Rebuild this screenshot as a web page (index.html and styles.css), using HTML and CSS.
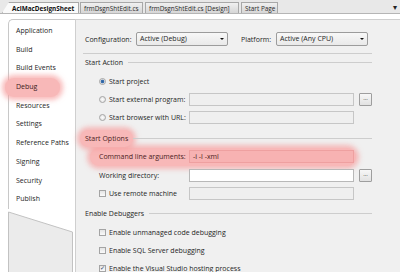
FILE: index.html
```html
<!DOCTYPE html>
<html lang="en">
<head>
    <meta charset="UTF-8">
    <title>AclMacDesignSheet - Debug</title>
    <link rel="stylesheet" href="styles.css">
</head>
<body>
    <div class="tabbar">
        <div class="tab active">AclMacDesignSheet</div>
        <div class="tab code">frmDsgnShtEdit.cs</div>
        <div class="tab design">frmDsgnShtEdit.cs [Design]</div>
        <div class="tab start">Start Page</div>
        <div class="tab-menu">&#9662;</div>
    </div>

    <div class="designer">
        <div class="sidebar">
            <ul class="nav">
                <li>Application</li>
                <li>Build</li>
                <li>Build Events</li>
                <li class="selected">Debug</li>
                <li>Resources</li>
                <li>Settings</li>
                <li>Reference Paths</li>
                <li>Signing</li>
                <li>Security</li>
                <li>Publish</li>
            </ul>
            <svg class="nav-tail" width="67" height="63" viewBox="0 0 67 63">
                <polygon points="0.5,3 64.5,23 64.5,64 0.5,64" fill="#ebebeb" stroke="#c2c2c2" stroke-width="1"/>
            </svg>
        </div>

        <div class="page">
            <div class="config-row">
                <span class="config-label">Configuration:</span>
                <div class="select">Active (Debug)</div>
                <span class="config-label platform">Platform:</span>
                <div class="select">Active (Any CPU)</div>
            </div>
            <div class="rule"></div>

            <div class="group-head"><span>Start Action</span></div>
            <div class="row first">
                <span class="radio checked"></span>
                <span class="label">Start project</span>
            </div>
            <div class="row">
                <span class="radio"></span>
                <span class="label">Start external program:</span>
                <div class="field"></div>
                <div class="browse">...</div>
            </div>
            <div class="row">
                <span class="radio"></span>
                <span class="label">Start browser with URL:</span>
                <div class="field"></div>
                <div class="browse-gap"></div>
            </div>

            <div class="group-head options"><span class="mark">Start Options</span></div>
            <div class="row marked">
                <span class="label">Command line arguments:</span>
                <div class="field">-i -l -xml</div>
            </div>
            <div class="row">
                <span class="label">Working directory:</span>
                <div class="field white"></div>
                <div class="browse">...</div>
            </div>
            <div class="row">
                <span class="check"></span>
                <span class="label">Use remote machine</span>
                <div class="field"></div>
                <div class="browse-gap"></div>
            </div>

            <div class="group-head debuggers"><span>Enable Debuggers</span></div>
            <div class="row first-check">
                <span class="check"></span>
                <span class="label">Enable unmanaged code debugging</span>
            </div>
            <div class="row">
                <span class="check"></span>
                <span class="label">Enable SQL Server debugging</span>
            </div>
            <div class="row">
                <span class="check checked">&#10003;</span>
                <span class="label">Enable the Visual Studio hosting process</span>
            </div>
        </div>
    </div>
</body>
</html>
```

FILE: styles.css
```css
body {
    margin: 0;
    width: 400px;
    height: 272px;
    overflow: hidden;
    background: #fff;
    font-family: "Open Sans", "Noto Sans", sans-serif;
    font-size: 7px;
    color: #1e1e1e;
}

/* document tabs */
.tabbar {
    height: 14px;
    box-sizing: border-box;
    display: flex;
    align-items: flex-end;
    background: #e8e8e8;
    border-bottom: 1px solid #b5b5b5;
    padding-left: 2px;
}

.tab {
    height: 11px;
    line-height: 11px;
    box-sizing: border-box;
    padding: 0 3px;
    margin-right: 2px;
    border: 1px solid #a8a8a8;
    border-bottom: none;
    background: linear-gradient(#f0f0f0, #d6d6d6);
    color: #2a2a2a;
    font-size: 6.4px;
    white-space: nowrap;
}

.tab.active {
    width: 77px;
    padding-left: 9px;
    margin-right: 1px;
    background: #fafafa;
    font-weight: bold;
    color: #111;
    clip-path: polygon(7px 0, 100% 0, 100% 100%, 0 100%);
}

.tab.code {
    width: 63px;
}

.tab.design {
    width: 94px;
}

.tab.start {
    width: 37px;
}

.tab-menu {
    margin-left: auto;
    align-self: center;
    padding-right: 3px;
    font-size: 8px;
    color: #222;
}

/* designer body */
.designer {
    display: flex;
    height: 258px;
    padding-top: 5px;
    box-sizing: border-box;
}

.sidebar {
    width: 67px;
    margin-left: 8px;
    display: flex;
    flex-direction: column;
}

.nav {
    list-style: none;
    margin: 0;
    padding: 2px 0 0;
    background: #fff;
    border-left: 1px solid #c8c8c8;
    border-top: 1px solid #c8c8c8;
    border-top-left-radius: 5px;
}

.nav li {
    height: 18.7px;
    line-height: 18.7px;
    padding-left: 7px;
    white-space: nowrap;
}

.nav li.selected {
    margin-left: -4px;
    padding-left: 11px;
    width: 44px;
    border-radius: 9px;
    background: #f8b8b8;
    box-shadow: 0 0 5px 3px rgba(246, 160, 160, 0.7);
    color: #3a1a1a;
}

.nav-tail {
    display: block;
}

.page {
    flex: 1;
    background: #f0f0f0;
    border-top: 1px solid #cfcfcf;
    border-left: 1px solid #cfcfcf;
}

.config-row {
    display: flex;
    align-items: center;
    margin-top: 12px;
    padding-left: 9px;
    height: 14px;
}

.config-label {
    width: 51px;
}

.config-label.platform {
    width: 35px;
    margin-left: 13px;
}

.select {
    width: 92px;
    height: 14px;
    box-sizing: border-box;
    line-height: 12px;
    padding-left: 3px;
    border: 1px solid #9c9c9c;
    border-radius: 2px;
    background: linear-gradient(#f8f8f8, #e9e9e9);
    position: relative;
}

.select::after {
    content: "";
    position: absolute;
    right: 3px;
    top: 5px;
    border-left: 2px solid transparent;
    border-right: 2px solid transparent;
    border-top: 2px solid #111;
}

.rule {
    margin: 7px 0 0 7px;
    width: 289px;
    height: 1px;
    background: #cdcdcd;
}

.group-head {
    display: flex;
    align-items: center;
    height: 12px;
    margin-top: 2px;
    padding-left: 9px;
    width: 287px;
}

.group-head::after {
    content: "";
    flex: 1;
    height: 1px;
    margin-left: 5px;
    background: #cdcdcd;
}

.group-head.options {
    margin-top: 5.5px;
}

.group-head.debuggers {
    margin-top: 4.5px;
}

.mark {
    padding: 4px 5px;
    margin: -4px -5px;
    border-radius: 9px;
    background: #f8b8b8;
    box-shadow: 0 0 5px 3px rgba(246, 160, 160, 0.7);
    color: #4a1c1c;
}

.row {
    display: flex;
    align-items: center;
    height: 18.4px;
    width: 296px;
    box-sizing: border-box;
    padding-left: 23px;
    white-space: nowrap;
}

.row.first {
    margin-top: 4px;
}

.row.first-check {
    margin-top: 3.5px;
}

.row.marked {
    margin-top: 3px;
    margin-left: 14px;
    padding-left: 9px;
    padding-right: 2px;
    width: 266px;
    border-radius: 9px;
    background: #f8b8b8;
    box-shadow: 0 0 5px 3px rgba(246, 160, 160, 0.7);
    color: #4a1c1c;
}

.radio {
    width: 7px;
    height: 7px;
    box-sizing: border-box;
    border-radius: 50%;
    border: 1px solid #a4a4a4;
    background: radial-gradient(#fdfdfd, #dcdcdc);
    margin-right: 3px;
}

.radio.checked {
    background: radial-gradient(#2e5f9a 0, #3c74b4 1.5px, #e8e8e8 2.2px);
}

.check {
    width: 7px;
    height: 7px;
    box-sizing: border-box;
    border: 1px solid #a4a4a4;
    background: linear-gradient(#e4e4e4, #fafafa);
    margin-right: 3px;
    font-size: 6px;
    line-height: 5px;
    text-align: center;
    color: #2a3e6a;
}

.field {
    margin-left: auto;
    width: 165px;
    height: 13px;
    box-sizing: border-box;
    border: 1px solid #c6c6c6;
    background: #efefef;
    line-height: 11px;
    padding-left: 3px;
}

.row.marked .field {
    background: #f7b2b2;
    border-color: #eea0a0;
}

.field.white {
    background: #fff;
    border-color: #b8b8b8;
}

.browse {
    width: 13px;
    height: 13px;
    box-sizing: border-box;
    margin-left: 5px;
    border: 1px solid #9e9e9e;
    border-radius: 1px;
    background: linear-gradient(#f7f7f7, #e2e2e2);
    line-height: 8px;
    text-align: center;
    font-size: 6px;
}

.browse-gap {
    width: 18px;
}
```
